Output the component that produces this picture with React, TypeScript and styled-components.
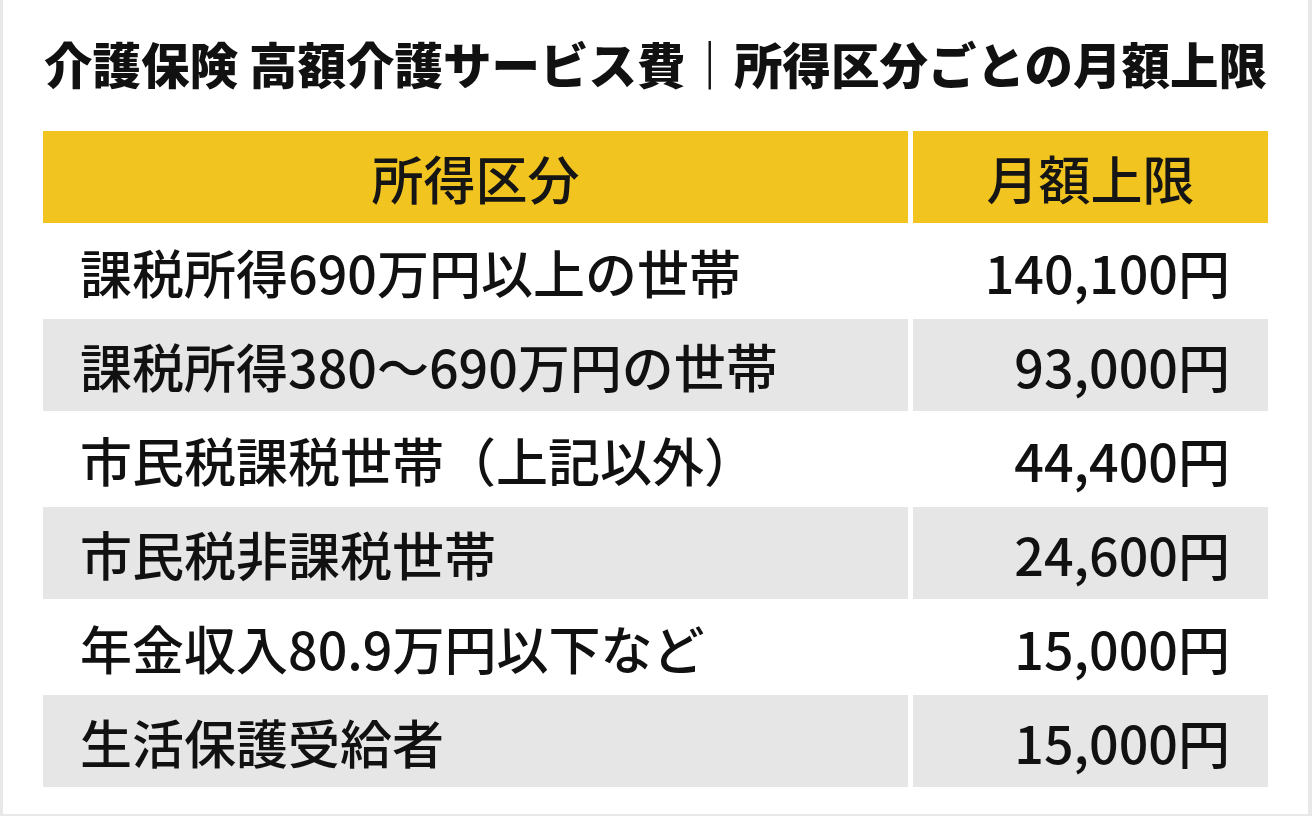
import React from "react";
import styled, { createGlobalStyle } from "styled-components";

const GlobalStyle = createGlobalStyle`
  html, body {
    margin: 0;
    padding: 0;
    background: #e8e8e8;
  }
  body {
    font-family: "Noto Sans CJK JP", "Noto Sans", sans-serif;
    color: #111;
  }
`;

const Card = styled.div`
  box-sizing: border-box;
  width: 1305px;
  height: 814px;
  margin: 0 4px 2px 3px;
  background: #ffffff;
  display: flex;
  flex-direction: column;
  padding: 0 40px 0 40px;
`;

const Title = styled.h1`
  box-sizing: border-box;
  margin: 0;
  height: 131px;
  padding-bottom: 6px;
  display: flex;
  align-items: center;
  justify-content: center;
  font-size: 48.5px;
  font-weight: 900;
  color: #111;
  white-space: nowrap;
`;

const Table = styled.div`
  display: grid;
  grid-template-columns: 865px 355px;
  grid-auto-rows: 92px;
  column-gap: 5px;
  row-gap: 2px;
`;

const HeadCell = styled.div`
  background: #f1c420;
  display: flex;
  align-items: center;
  justify-content: center;
  font-size: 52px;
  font-weight: 500;
  color: #151515;
`;

const Cell = styled.div<{ $shade: boolean; $right?: boolean }>`
  background: ${(p) => (p.$shade ? "#e6e6e6" : "#ffffff")};
  display: flex;
  align-items: center;
  justify-content: ${(p) => (p.$right ? "flex-end" : "flex-start")};
  padding: ${(p) => (p.$right ? "0 38px 0 0" : "0 0 0 37px")};
  font-size: 52px;
  font-weight: 500;
  color: #111;
  white-space: nowrap;
`;

const rows: [string, string][] = [
  ["課税所得690万円以上の世帯", "140,100円"],
  ["課税所得380～690万円の世帯", "93,000円"],
  ["市民税課税世帯（上記以外）", "44,400円"],
  ["市民税非課税世帯", "24,600円"],
  ["年金収入80.9万円以下など", "15,000円"],
  ["生活保護受給者", "15,000円"],
];

export default function App() {
  return (
    <>
      <GlobalStyle />
      <Card>
        <Title>介護保険 高額介護サービス費｜所得区分ごとの月額上限</Title>
        <Table>
          <HeadCell>所得区分</HeadCell>
          <HeadCell>月額上限</HeadCell>
          {rows.map(([label, value], i) => (
            <React.Fragment key={i}>
              <Cell $shade={i % 2 === 1}>{label}</Cell>
              <Cell $shade={i % 2 === 1} $right>
                {value}
              </Cell>
            </React.Fragment>
          ))}
        </Table>
      </Card>
    </>
  );
}
